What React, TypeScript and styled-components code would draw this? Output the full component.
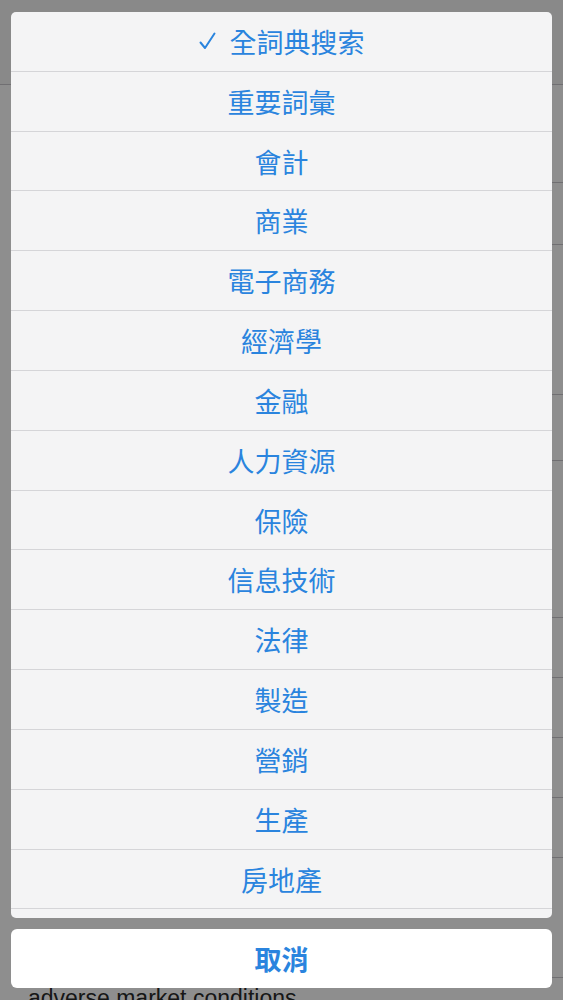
import React from "react";
import styled, { createGlobalStyle } from "styled-components";

const GlobalStyle = createGlobalStyle`
  html, body {
    margin: 0;
    padding: 0;
    background: #ffffff;
    font-family: "Liberation Sans", "Noto Sans CJK TC", sans-serif;
  }
  * {
    box-sizing: border-box;
  }
`;

// underlying dictionary screen (dimmed by the overlay)
const Screen = styled.div`
  width: 563px;
  height: 1000px;
  overflow: hidden;
  background: #fefefe;
`;

const Header = styled.div`
  height: 85px;
  background: #f4f4f5;
  border-bottom: 1px solid #c8c7cc;
`;

const EntryRow = styled.div<{ $h: number }>`
  height: ${(p) => p.$h}px;
  margin-left: 15px;
  border-bottom: 1px solid #c8c7cc;
  padding: 7px 0 0 13px;
  font-size: 23px;
  line-height: 26px;
  color: #2a2a2a;
`;

// the action sheet
const Overlay = styled.div`
  position: fixed;
  inset: 0;
  background: rgba(0, 0, 0, 0.44);
  display: flex;
  flex-direction: column;
  padding: 12px 11px;
  gap: 11px;
`;

const Sheet = styled.div`
  height: 906px;
  background: #f4f4f5;
  border-radius: 5px;
  overflow: hidden;
`;

const Option = styled.button`
  display: flex;
  width: 100%;
  height: 59.83px;
  align-items: center;
  justify-content: center;
  gap: 14px;
  border: none;
  border-bottom: 1px solid #d5d5d8;
  background: transparent;
  padding: 0;
  font-family: "Noto Sans CJK TC", "Noto Sans CJK SC", sans-serif;
  font-size: 27px;
  font-weight: 400;
  color: #2a84de;
  cursor: pointer;
`;

const CancelButton = styled.button`
  height: 59px;
  border: none;
  border-radius: 6px;
  background: #ffffff;
  font-family: "Noto Sans CJK TC", "Noto Sans CJK SC", sans-serif;
  font-size: 27px;
  font-weight: 700;
  color: #2a84de;
  cursor: pointer;
`;

const Check = () => (
  <svg width="17" height="18" viewBox="0 0 17 18" fill="none">
    <path
      d="M1.5 10.5 L6 16 L15.5 1.5"
      stroke="#2a84de"
      strokeWidth="2"
      strokeLinecap="round"
      strokeLinejoin="round"
    />
  </svg>
);

const categories = [
  "全詞典搜索",
  "重要詞彙",
  "會計",
  "商業",
  "電子商務",
  "經濟學",
  "金融",
  "人力資源",
  "保險",
  "信息技術",
  "法律",
  "製造",
  "營銷",
  "生產",
  "房地產",
  "稅收",
];

// rows of the list behind the sheet; only the last one peeks out below it
const entries = [98, 62, 150, 66, 157, 60, 60, 60, 60, 120];

export default function App() {
  return (
    <>
      <GlobalStyle />
      <Screen>
        <Header />
        {entries.map((h, i) => (
          <EntryRow key={i} $h={h} />
        ))}
        <EntryRow $h={60}>adverse market conditions</EntryRow>
      </Screen>
      <Overlay>
        <Sheet>
          {categories.map((c, i) => (
            <Option key={c}>
              {i === 0 && <Check />}
              <span>{c}</span>
            </Option>
          ))}
        </Sheet>
        <CancelButton>取消</CancelButton>
      </Overlay>
    </>
  );
}
